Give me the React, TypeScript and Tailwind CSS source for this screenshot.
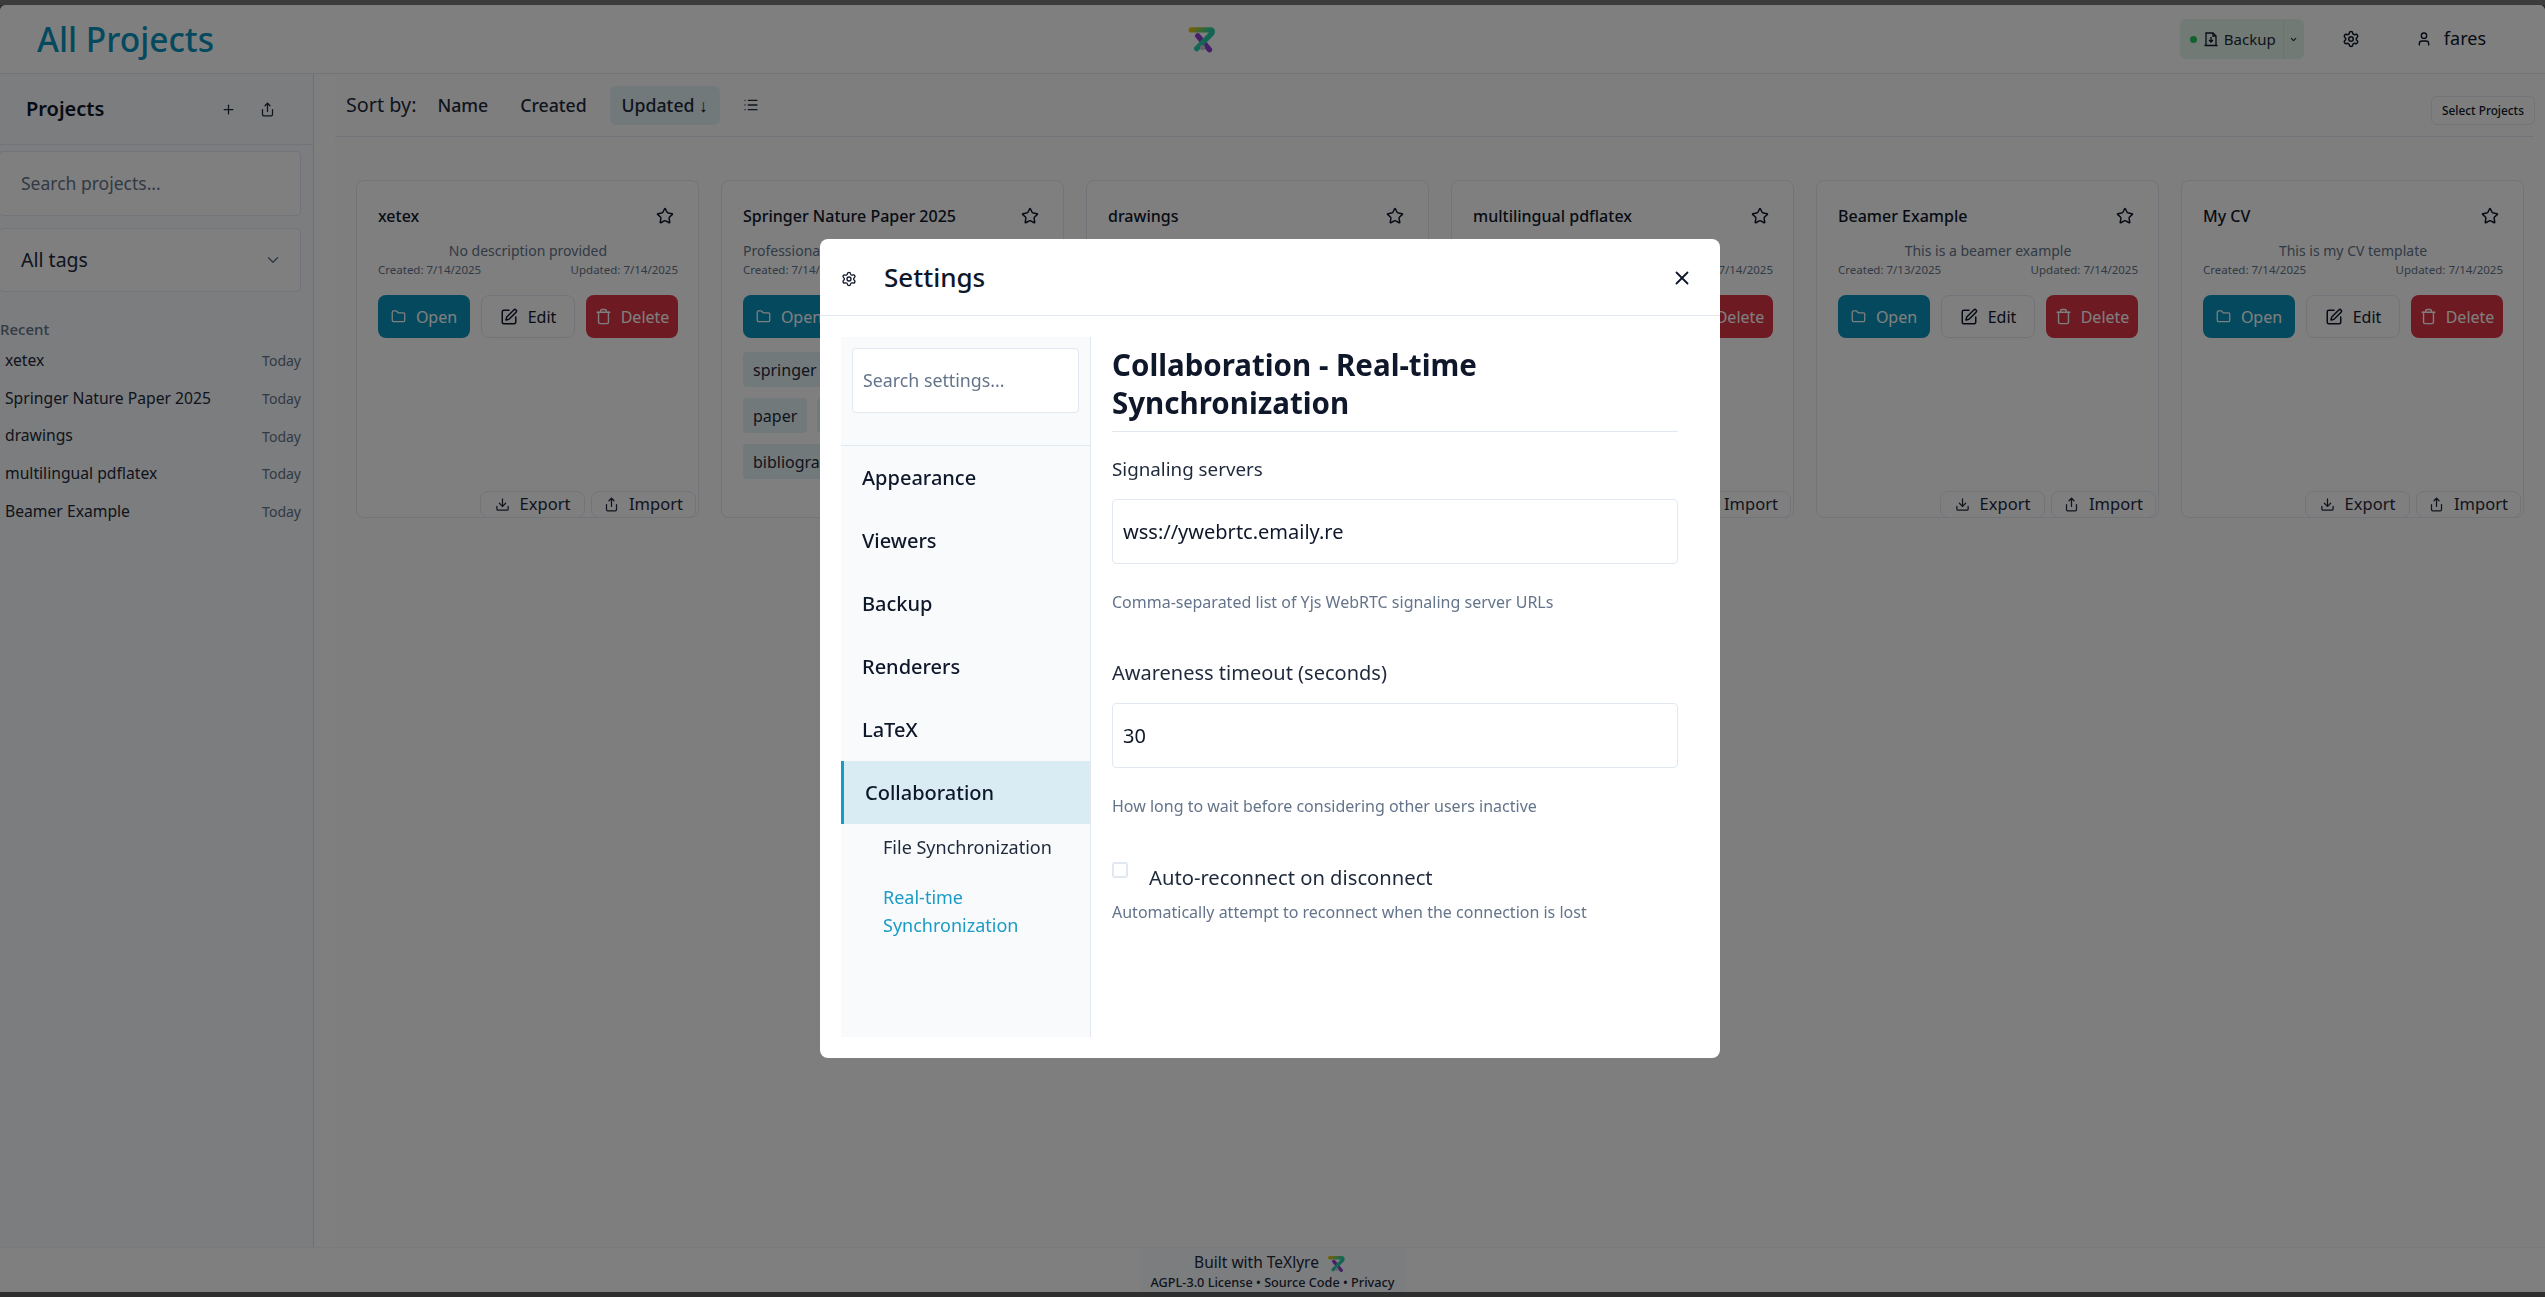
import { ChevronDown, Download, Folder, List, Plus, Settings, Share, SquarePen, Star, Trash, User, X } from "lucide-react";

const recent = ["xetex", "Springer Nature Paper 2025", "drawings", "multilingual pdflatex", "Beamer Example"];

const projects = [
  { name: "xetex", desc: "No description provided", created: "7/14/2025", tags: [] as string[][] },
  {
    name: "Springer Nature Paper 2025",
    desc: "Professional paper template for Springer Nature",
    created: "7/14/2025",
    tags: [["springer", "nature"], ["paper", "template"], ["bibliography"]],
  },
  { name: "drawings", desc: "Drawing examples", created: "7/14/2025", tags: [] },
  { name: "multilingual pdflatex", desc: "Multilingual example", created: "7/14/2025", tags: [] },
  { name: "Beamer Example", desc: "This is a beamer example", created: "7/13/2025", tags: [] },
  { name: "My CV", desc: "This is my CV template", created: "7/14/2025", tags: [] },
];

const navItems = ["Appearance", "Viewers", "Backup", "Renderers", "LaTeX"];

function Logo({ size, id }: { size: number; id: string }) {
  return (
    <svg width={size} height={size} viewBox="0 0 28 28" fill="none">
      <defs>
        <linearGradient id={id} x1="2" y1="5" x2="24" y2="24" gradientUnits="userSpaceOnUse">
          <stop offset="0" stopColor="#f2c200" />
          <stop offset="0.5" stopColor="#2fd0a0" />
          <stop offset="1" stopColor="#12b8c8" />
        </linearGradient>
      </defs>
      <path d="M10 11 L21 24" stroke="#8a3fd0" strokeWidth="5" strokeLinecap="round" />
      <path d="M4 5.5 H22 C24 5.5 24 8 22.5 9.5 L9 23" stroke={`url(#${id})`} strokeWidth="5" strokeLinecap="round" strokeLinejoin="round" />
      <circle cx="14.5" cy="22" r="2.5" fill="#c0c8d0" />
    </svg>
  );
}

function ProjectCard({ project }: { project: (typeof projects)[number] }) {
  return (
    <div className="flex h-[338px] flex-col rounded-lg border border-[#e2e8f0] bg-white pl-[21px] pr-[20px] pt-[25px]">
      <div className="flex h-5 items-center justify-between">
        <span className="text-[16px] font-medium text-[#0f172a]">{project.name}</span>
        <Star className="mr-[4px] size-[18px] text-[#0f172a]" strokeWidth={2} />
      </div>
      <p className="mt-[15px] h-5 whitespace-nowrap text-center text-[14px] leading-5 text-[#64748b]">{project.desc}</p>
      <div className="flex h-[18px] justify-between text-[11.5px] leading-[18px] text-[#64748b]">
        <span>Created: {project.created}</span>
        <span>Updated: 7/14/2025</span>
      </div>
      <div className="mt-[16px] flex h-[43px] shrink-0 justify-between text-[16px]">
        <button className="flex w-[92px] items-center justify-center gap-[10px] rounded-lg bg-[#0b93bc] text-white">
          <Folder className="size-[15px]" />
          Open
        </button>
        <button className="flex w-[94px] items-center justify-center gap-[10px] rounded-lg border border-[#e2e8f0] text-[#0f172a]">
          <SquarePen className="size-[18px]" />
          Edit
        </button>
        <button className="flex w-[92px] items-center justify-center gap-[9px] rounded-lg bg-[#dc3545] text-white">
          <Trash className="size-[17px]" />
          Delete
        </button>
      </div>
      <div className="mt-[14px] flex flex-col gap-[11px]">
        {project.tags.map((row) => (
          <div key={row[0]} className="flex gap-[10px]">
            {row.map((tag) => (
              <span key={tag} className="flex h-[35px] items-center rounded bg-[#e4f2f6] px-[10px] text-[16px] text-[#1e293b]">
                {tag}
              </span>
            ))}
          </div>
        ))}
      </div>
      <div className="mb-[-1px] mr-[-18px] mt-auto flex justify-end gap-[6px] text-[16.5px] text-[#1e293b]">
        <button className="flex h-[27px] w-[105px] items-center justify-center gap-[10px] rounded-lg border border-[#e2e8f0] bg-white">
          <Download className="size-[15px]" />
          Export
        </button>
        <button className="flex h-[27px] w-[105px] items-center justify-center gap-[10px] rounded-lg border border-[#e2e8f0] bg-white">
          <Share className="size-[15px]" />
          Import
        </button>
      </div>
    </div>
  );
}

function SettingsField({ label, labelSize, value, help }: { label: string; labelSize: string; value: string; help: string }) {
  return (
    <div>
      <label className={`block h-6 leading-6 text-[#1e293b] ${labelSize}`}>{label}</label>
      <div className="mt-[18px] flex h-[65px] items-center rounded border border-[#e2e8f0] bg-white px-[10px] text-[20px] text-[#0f172a]">
        {value}
      </div>
      <p className="mt-[28px] h-5 text-[16px] leading-5 text-[#64748b]">{help}</p>
    </div>
  );
}

function SettingsModal() {
  return (
    <div className="fixed inset-0 flex items-center justify-center bg-black/50 pr-[5px]">
      <div className="flex h-[819px] w-[900px] flex-col rounded-lg bg-white">
        <div className="flex h-[77px] shrink-0 items-center border-b border-[#e2e8f0] pl-[21px] pr-[27px]">
          <Settings className="mt-1 size-[16px] text-[#0f172a]" />
          <h2 className="ml-[27px] text-[26px] font-medium text-[#0f172a]">Settings</h2>
          <X className="ml-auto mt-px size-[22px] text-[#0f172a]" />
        </div>
        <div className="flex min-h-0 flex-1 p-[21px]">
          <div className="w-[250px] shrink-0 border-r border-[#e2e8f0] bg-[#f8fafc]">
            <div className="h-[109px] border-b border-[#e2e8f0] px-[11px] pt-[11px]">
              <div className="flex h-[65px] items-center rounded border border-[#e2e8f0] bg-white px-[10px] text-[17.8px] text-[#64748b]">
                Search settings...
              </div>
            </div>
            {navItems.map((item) => (
              <div key={item} className="flex h-[63px] items-center pl-[21px] text-[20px] font-medium text-[#0f172a]">
                {item}
              </div>
            ))}
            <div className="flex h-[63px] items-center border-l-[3px] border-[#1a9bc5] bg-[#daecf3] pl-[21px] text-[20px] font-medium text-[#0f172a]">
              Collaboration
            </div>
            <div className="mt-[9px] pl-[42px] pr-[20px] text-[18px] leading-[28px]">
              <div className="text-[#1e293b]">File Synchronization</div>
              <div className="mt-[22px] text-[#1a9bc5]">
                Real-time
                <br />
                Synchronization
              </div>
            </div>
          </div>
          <div className="ml-[21px] w-[566px] pt-[9px]">
            <h3 className="border-b border-[#e2e8f0] pb-[9px] text-[29.5px] font-bold leading-[38px] text-[#0f172a]">
              Collaboration - Real-time Synchronization
            </h3>
            <div className="mt-[25px]">
              <SettingsField label="Signaling servers" labelSize="text-[18.8px]" value="wss://ywebrtc.emaily.re" help="Comma-separated list of Yjs WebRTC signaling server URLs" />
            </div>
            <div className="mt-[49px]">
              <SettingsField label="Awareness timeout (seconds)" labelSize="text-[20px]" value="30" help="How long to wait before considering other users inactive" />
            </div>
            <div className="mt-[46px] flex">
              <span className="size-4 rounded-[3px] border-2 border-[#e2e8f0] bg-white" />
              <span className="ml-[21px] mt-[2px] text-[20.2px] leading-[26px] text-[#1e293b]">Auto-reconnect on disconnect</span>
            </div>
            <p className="mt-3 h-5 text-[16px] leading-5 text-[#64748b]">Automatically attempt to reconnect when the connection is lost</p>
          </div>
        </div>
      </div>
    </div>
  );
}

export default function App() {
  return (
    <div className="flex h-screen w-full flex-col overflow-hidden bg-[#5e5e5e] font-['Noto_Sans',sans-serif]">
      <div className="h-[5px] shrink-0 bg-[#787878]" />
      <div className="flex min-h-0 flex-1 flex-col overflow-hidden rounded-t-md bg-white">
        <header className="relative flex h-[69px] shrink-0 items-center border-b border-[#e2e8f0] bg-white pl-[37px] pr-[59px]">
          <h1 className="text-[33.5px] font-medium text-[#0b93bc]">All Projects</h1>
          <div className="ml-[973px] flex items-center">
            <Logo size={30} id="logo-header" />
          </div>
          <div className="ml-auto flex items-center">
            <div className="flex h-10 w-[124px] items-center rounded-md bg-[#e2f5e8] pl-[10px] text-[15px] text-[#1e293b]">
              <span className="size-[7px] rounded-full bg-[#22c55e]" />
              <svg className="ml-[6px] size-[16px]" viewBox="0 0 16 16" fill="none" stroke="#0f172a" strokeWidth="1.3">
                <path d="M3 14V2h7l3 3v9" />
                <path d="M10 2v3h3M8 6v5M6 9l2 2 2-2M1.5 14.5h13" />
              </svg>
              <span className="ml-[5px]">Backup</span>
              <span className="ml-[7px] flex h-full flex-1 items-center justify-center border-l border-[#d3ecdc]">
                <ChevronDown className="size-[9px]" strokeWidth={3} />
              </span>
            </div>
            <Settings className="ml-[38px] size-[18px] text-[#0f172a]" />
            <User className="ml-[56px] size-[16px] text-[#0f172a]" />
            <span className="mb-[2px] ml-3 text-[18px] text-[#0f172a]">fares</span>
          </div>
        </header>

        <div className="flex min-h-0 flex-1">
          <aside className="w-[314px] shrink-0 border-r border-[#d9dfe6] bg-[#f8fafc]">
            <div className="flex h-[71px] items-center border-b border-[#e2e8f0] pl-[26px] pr-[38px]">
              <span className="text-[20px] font-semibold text-[#0f172a]">Projects</span>
              <Plus className="ml-auto size-[15px] text-[#1e293b]" />
              <Share className="ml-[24px] size-[15px] text-[#1e293b]" />
            </div>
            <div className="-ml-px mt-[6px] flex h-[65px] w-[302px] items-center rounded border border-[#e2e8f0] bg-white pl-[21px] text-[17.5px] text-[#64748b]">
              Search projects...
            </div>
            <div className="-ml-px mt-3 flex h-[64px] w-[302px] items-center justify-between rounded border border-[#e2e8f0] bg-white pl-[21px] pr-[18px] text-[19.5px] text-[#1e293b]">
              All tags
              <ChevronDown className="size-[18px] text-[#64748b]" />
            </div>
            <div className="mt-[27px] h-5 text-[15px] font-medium leading-5 text-[#64748b]">Recent</div>
            <div className="mt-[3px] w-[301px]">
              {recent.map((name) => (
                <div key={name} className="flex h-[37.7px] items-center justify-between pl-[5px] text-[15.7px] text-[#1e293b]">
                  {name}
                  <span className="text-[14px] text-[#64748b]">Today</span>
                </div>
              ))}
            </div>
          </aside>

          <main className="ml-[21px] min-w-0 flex-1 bg-[#fcfcfd] pr-[21px]">
            <div className="mr-[-10px] flex h-[63px] items-center border-b border-[#e2e8f0] pl-[11px]">
              <span className="text-[19.8px] text-[#1e293b]">Sort by:</span>
              <span className="ml-[21px] text-[17.7px] font-medium text-[#1e293b]">Name</span>
              <span className="ml-[32px] text-[17.7px] font-medium text-[#1e293b]">Created</span>
              <span className="ml-[23px] flex h-[39px] w-[110px] items-center justify-center rounded-md bg-[#e4f2f6] text-[17.7px] font-medium text-[#1e293b]">
                Updated ↓
              </span>
              <List className="ml-[23px] size-[16px] text-[#1e293b]" />
              <button className="ml-auto mr-[-1px] mt-[11px] h-[29px] w-[104px] rounded-md border border-[#e2e8f0] text-[11.8px] font-medium text-[#0f172a]">
                Select Projects
              </button>
            </div>
            <div className="mt-[43px] grid grid-cols-6 gap-[22px] pl-[21px]">
              {projects.map((project) => (
                <ProjectCard key={project.name} project={project} />
              ))}
            </div>
          </main>
        </div>

        <footer className="flex h-[45px] shrink-0 justify-center border-t border-[#f1f5f9] bg-white">
          <div className="flex w-[266px] flex-col items-center bg-[#f8fafc] pt-1 text-[#1e293b]">
            <div className="mr-[5px] flex h-[22px] items-center gap-[8px] text-[15.5px]">
              Built with TeXlyre
              <Logo size={19} id="logo-footer" />
            </div>
            <div className="whitespace-nowrap text-[12.7px] font-medium leading-4">AGPL-3.0 License • Source Code • Privacy</div>
          </div>
        </footer>
      </div>
      <div className="h-[5px] shrink-0 bg-[#5e5e5e]" />
      <SettingsModal />
    </div>
  );
}
